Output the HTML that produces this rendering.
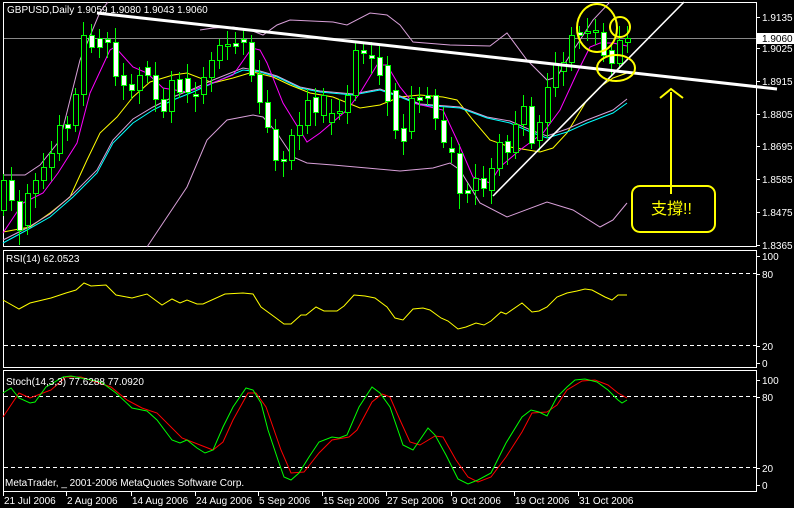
<!DOCTYPE html>
<html><head><meta charset="utf-8"><style>
body{margin:0;background:#000;width:794px;height:508px;overflow:hidden}
svg{display:block}
text{font-family:"Liberation Sans","Noto Sans CJK TC",sans-serif;font-size:10px;fill:#fff}
</style></head><body>
<svg id="s" width="794" height="508" xmlns="http://www.w3.org/2000/svg" shape-rendering="crispEdges">
<rect width="794" height="508" fill="#000"/>
<!-- panels -->
<rect x="3.5" y="2.5" width="753" height="244" fill="none" stroke="#fff"/>
<rect x="3.5" y="250.5" width="753" height="117" fill="none" stroke="#fff"/>
<rect x="3.5" y="370.5" width="753" height="121" fill="none" stroke="#fff"/>
<line x1="4" y1="38.5" x2="756" y2="38.5" stroke="#888"/>
<g stroke="#fff" stroke-dasharray="4,3">
<line x1="4" y1="273.5" x2="756" y2="273.5"/><line x1="4" y1="345.5" x2="756" y2="345.5"/>
<line x1="4" y1="396.5" x2="756" y2="396.5"/><line x1="4" y1="467.5" x2="756" y2="467.5"/>
</g>
<g id="ind" fill="none" shape-rendering="auto"></g>
<g id="cdl"></g>
<g shape-rendering="auto">
<line x1="97" y1="13" x2="777" y2="89" stroke="#fff" stroke-width="3"/>
<line x1="493" y1="196" x2="684" y2="2" stroke="#fff" stroke-width="1.6"/>
<g stroke="#ff0" stroke-width="2" fill="none">
<ellipse cx="597" cy="28" rx="20" ry="24"/>
<circle cx="620" cy="27" r="10"/>
<ellipse cx="616" cy="68" rx="19" ry="13"/>
<line x1="671" y1="92" x2="671" y2="194"/>
<polyline points="660,98 671,89 683,98"/>
<rect x="632" y="186" width="83" height="46" rx="8"/>
</g>
</g>
<text x="651" y="214" style="font-size:16px;fill:#ff0">支撐!!</text>
<text x="7" y="13">GBPUSD,Daily  1.9059 1.9080 1.9043 1.9060</text>
<text x="6" y="262">RSI(14) 62.0523</text>
<text x="6" y="385">Stoch(14,3,3) 77.6288 77.0920</text>
<text x="5" y="486">MetaTrader, _ 2001-2006 MetaQuotes Software Corp.</text>
<g id="ax"></g>
<rect x="757" y="33" width="37" height="11" fill="#fff"/>
<text x="762" y="42" style="fill:#000">1.9060</text>
</svg>
<script>
var ns="http://www.w3.org/2000/svg";
function el(p,t,a,txt){var e=document.createElementNS(ns,t);for(var k in a)e.setAttribute(k,a[k]);if(txt)e.textContent=txt;document.getElementById(p).appendChild(e);return e;}
var C=[[180,210,'g'],[180,200,'w'],[201,230,'w'],[193,225,'g'],[180,193,'g'],[167,180,'g'],[153,167,'g'],[125,153,'g'],[124,128,'w'],[94,125,'g'],[35,94,'g'],[35,47,'w'],[38,47,'w'],[39,42,'w'],[42,76,'w'],[75,85,'w'],[84,90,'w'],[75,90,'g'],[67,75,'w'],[75,99,'w'],[99,111,'w'],[80,111,'g'],[79,92,'w'],[78,92,'w'],[94,96,'w'],[77,94,'g'],[60,77,'g'],[45,60,'g'],[44,46,'g'],[43,46,'w'],[39,42,'w'],[42,75,'w'],[74,102,'w'],[102,127,'w'],[129,160,'w'],[159,161,'w'],[135,160,'g'],[125,135,'g'],[100,125,'g'],[97,112,'w'],[95,115,'g'],[113,122,'g'],[111,113,'g'],[95,112,'g'],[50,95,'g'],[50,53,'w'],[55,58,'w'],[57,75,'w'],[65,101,'w'],[90,130,'w'],[128,141,'w'],[98,131,'g'],[97,100,'w'],[95,98,'w'],[95,118,'w'],[120,142,'w'],[148,152,'w'],[153,193,'w'],[190,193,'w'],[178,190,'g'],[178,188,'w'],[168,190,'g'],[142,168,'g'],[141,152,'w'],[124,152,'g'],[106,124,'g'],[106,143,'w'],[122,140,'g'],[87,122,'g'],[64,87,'g'],[62,71,'g'],[35,62,'g'],[32,35,'w'],[31,33,'g'],[30,32,'g'],[32,55,'w'],[50,63,'w'],[40,63,'g'],[38,42,'g']];
C.forEach(function(c,i){var x=3+8*i;var h=c[0]-6-(i*7%9),l=c[1]+6+(i*5%11);
el('cdl','line',{x1:x+.5,y1:Math.max(h,4),x2:x+.5,y2:Math.min(l,245),stroke:'#0f0'});
el('cdl','rect',{x:x-2+.5,y:c[0]+.5,width:5,height:Math.max(c[1]-c[0],1),fill:c[2]=='g'?'#000':'#fff',stroke:'#0f0'});});
function pl(col,pts,w){el('ind','polyline',{points:pts,stroke:col,'stroke-width':w||1});}
pl('#d9a0d9',"3,175 25,175 40,165 60,140 80,60 100,12 108,2");
pl('#d9a0d9',"200,30 213,28 233,27 250,30 263,35 277,25 290,20 333,22 347,25 370,13 387,15 400,25 413,42 450,45 490,46 507,33 527,60 547,80 557,77 567,60 580,40 593,20 610,2");
pl('#d9a0d9',"147,247 167,217 187,187 207,140 227,120 253,115 263,117 277,133 293,157 307,163 333,165 367,168 400,171 433,168 450,163 460,170 480,203 507,217 547,202 573,210 600,227 613,220 627,203");
pl('#ff0',"3,232 30,227 50,213 70,197 87,160 100,133 117,117 133,97 150,82 173,75 187,73 213,83 233,78 253,72 273,77 290,85 310,93 333,97 360,108 380,105 400,97 420,95 443,97 457,100 473,120 490,140 510,147 540,152 553,148 567,133 587,100 600,87 613,78 627,73");
pl('#d9a0d9',"3,240 27,228 50,214 73,194 97,170 113,140 133,119 153,107 173,97 193,89 213,80 243,68 260,71 277,76 300,87 320,91 353,94 380,89 400,96 420,104 460,107 487,117 510,121 533,131 547,136 567,129 587,120 613,110 627,99");
pl('#0ff',"3,243 27,230 50,217 73,197 97,173 113,143 133,123 153,110 173,100 193,92 213,83 243,70 260,72 277,77 300,88 320,92 353,95 380,90 400,97 420,105 460,108 487,118 510,123 533,133 547,138 567,132 587,123 613,113 627,103");
pl('#f0f',"3,233 23,203 43,193 58,173 77,143 90,93 110,50 115,47 133,67 147,73 163,88 187,92 207,85 233,75 252,48 260,50 267,63 283,103 307,142 320,133 347,110 360,93 377,65 387,65 400,87 413,103 443,110 457,140 473,177 490,183 500,167 520,150 543,133 560,110 577,73 590,47 600,43 613,43 627,46");
pl('#ff0',"3,300 19,309 30,303 51,298 66,293 76,290 84,283 91,286 106,285 116,295 132,298 147,294 162,305 172,299 180,303 187,300 197,304 203,304 225,294 243,293 253,294 261,307 276,318 284,324 291,324 301,315 306,315 316,307 324,311 337,311 344,306 354,295 365,296 375,298 387,307 395,318 403,320 413,309 423,308 430,310 441,318 448,321 458,329 466,327 476,323 484,325 491,321 501,312 506,314 522,303 532,312 539,311 547,307 557,297 567,293 577,291 585,289 592,290 605,297 612,300 618,295 627,295");
pl('#f00',"3,417 19,393 30,398 51,390 66,377 81,377 111,387 127,400 142,408 157,413 182,438 213,450 223,442 233,420 248,393 256,393 266,407 281,450 291,473 304,472 319,453 332,440 349,437 357,430 372,402 382,394 390,397 400,420 410,442 420,445 435,436 443,437 456,460 468,477 478,482 491,477 506,457 522,432 532,413 547,412 557,405 567,390 582,381 595,380 608,385 618,393 627,398");
pl('#0f0',"3,393 11,388 19,398 30,403 35,402 46,387 53,383 63,377 71,376 101,382 116,393 132,408 147,411 157,420 172,440 180,443 187,440 197,448 205,453 213,450 223,427 233,407 246,388 253,390 261,403 268,430 278,460 284,477 291,480 299,473 309,457 319,442 332,437 339,438 347,435 359,407 372,387 380,393 390,407 403,445 413,450 428,428 435,435 446,455 458,479 468,484 478,480 491,473 506,443 522,417 531,410 539,412 547,416 557,397 567,387 575,380 585,379 597,382 608,390 618,400 622,403 627,400");
[["1.9135",17],["1.9025",48],["1.8915",81],["1.8805",114],["1.8695",146],["1.8585",179],["1.8475",212],["1.8365",245],["100",256],["80",274],["20",346],["0",363],["100",380],["80",397],["20",468],["0",485]].forEach(function(a){
el('ax','line',{x1:757,y1:a[1]+.5,x2:760,y2:a[1]+.5,stroke:'#fff'});el('ax','text',{x:762,y:a[1]+4},a[0]);});
[["21 Jul 2006",3],["2 Aug 2006",66],["14 Aug 2006",131],["24 Aug 2006",195],["5 Sep 2006",258],["15 Sep 2006",322],["27 Sep 2006",386],["9 Oct 2006",451],["19 Oct 2006",514],["31 Oct 2006",578]].forEach(function(a){
el('ax','line',{x1:a[1]+.5,y1:492,x2:a[1]+.5,y2:496,stroke:'#fff'});el('ax','text',{x:a[1]+1,y:504},a[0]);});
</script>
</body></html>
